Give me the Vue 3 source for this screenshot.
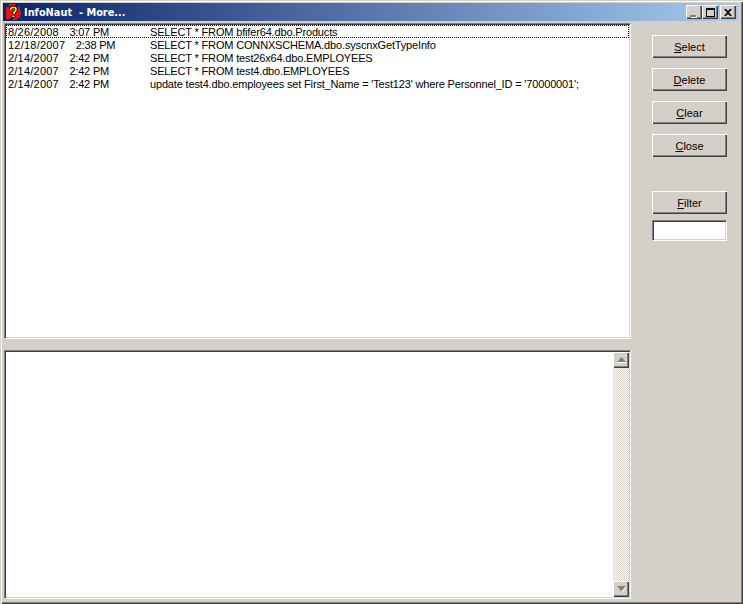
<script setup>
const title = 'InfoNaut  - More...'
const rows = [
  { date: '8/26/2008', time: '3:07 PM', sql: 'SELECT * FROM bfifer64.dbo.Products', focus: true },
  { date: '12/18/2007', time: '2:38 PM', sql: 'SELECT * FROM CONNXSCHEMA.dbo.syscnxGetTypeInfo' },
  { date: '2/14/2007', time: '2:42 PM', sql: 'SELECT * FROM test26x64.dbo.EMPLOYEES' },
  { date: '2/14/2007', time: '2:42 PM', sql: 'SELECT * FROM test4.dbo.EMPLOYEES' },
  { date: '2/14/2007', time: '2:42 PM', sql: "update test4.dbo.employees set First_Name = 'Test123' where Personnel_ID = '70000001';" },
]
const actions = [
  { key: 'S', rest: 'elect' },
  { key: 'D', rest: 'elete' },
  { key: 'C', rest: 'lear' },
  { key: 'C', rest: 'lose' },
]
</script>

<template>
  <div class="window">
    <header class="titlebar">
      <svg class="app-icon" width="16" height="16" viewBox="0 0 16 16">
        <path d="M1 3h3V0h6v3h5v4h1v4h-1v3h-3v2H8v-2H5v1H1z" fill="#e8101c"/>
        <path d="M5.500 6C5.500 2.500 11 2.500 11 5.500 11 7.500 8.500 7.500 8.500 10" fill="none" stroke="#000" stroke-width="3.400"/>
        <path d="M5.500 6C5.500 2.500 11 2.500 11 5.500 11 7.500 8.500 7.500 8.500 10" fill="none" stroke="#fce000" stroke-width="1.800"/>
        <rect x="7" y="11" width="3" height="2.500" fill="#fce000" stroke="#000" stroke-width=".8"/>
      </svg>
      <span class="title">{{ title }}</span>
      <div class="caption-buttons">
        <button class="cap"><span class="min-glyph"></span></button>
        <button class="cap"><span class="max-glyph"></span></button>
        <button class="cap close">
          <svg width="8" height="7" viewBox="0 0 8 7"><path d="M0 0h2l2 2 2-2h2L5 3.500 8 7H6L4 5 2 7H0l3-3.500z" fill="#000"/></svg>
        </button>
      </div>
    </header>

    <div class="client">
      <main class="panes">
        <section class="list sunken">
          <div v-for="(r, i) in rows" :key="i" class="row" :class="{ focus: r.focus }">
            <span class="when"><span class="date">{{ r.date }}</span><span class="time">{{ r.time }}</span></span>
            <span class="sql">{{ r.sql }}</span>
          </div>
        </section>
        <section class="detail sunken">
          <div class="detail-body"></div>
          <div class="scrollbar">
            <div class="arrow">
              <svg width="9" height="6" viewBox="0 0 9 6"><path d="M4.500 0 9 5H0z" fill="#808080"/><path d="M0 5h9v1H0z" fill="#fff"/></svg>
            </div>
            <div class="track"></div>
            <div class="arrow">
              <svg width="9" height="6" viewBox="0 0 9 6"><path d="M0 0h9L4.500 5.500z" fill="#808080"/><path d="M4.500 5.500 9 0v1.500L5.500 6z" fill="#fff"/></svg>
            </div>
          </div>
        </section>
      </main>

      <aside class="side">
        <div class="actions">
          <button v-for="(a, i) in actions" :key="i" class="btn"><u>{{ a.key }}</u>{{ a.rest }}</button>
        </div>
        <div class="filter">
          <button class="btn"><u>F</u>ilter</button>
          <input class="filter-input sunken" type="text" />
        </div>
      </aside>
    </div>
  </div>
</template>

<style>
html, body { margin: 0; padding: 0; background: #d4d0c8; }
</style>

<style scoped>
.window {
  width: 743px;
  height: 604px;
  box-sizing: border-box;
  background: #d4d0c8;
  padding: 3px 5px 3px 3px;
  display: flex;
  flex-direction: column;
  font-family: "Liberation Sans", Arial, sans-serif;
  font-size: 11px;
  color: #000;
  box-shadow: inset 1px 1px 0 #d4d0c8, inset 2px 2px 0 #fff, inset -1px -1px 0 #404040, inset -2px -2px 0 #808080;
}
.titlebar {
  height: 18px;
  flex: none;
  display: flex;
  align-items: center;
  padding-left: 2px;
  background: linear-gradient(90deg, #0a246a, #a6caf0);
}
.app-icon { flex: none; }
.title {
  margin-left: 3px;
  color: #fff;
  font-family: "DejaVu Sans", sans-serif;
  font-weight: 700;
  font-size: 9.800px;
  white-space: pre;
}
.caption-buttons { margin-left: auto; margin-right: 2px; display: flex; }
.cap {
  width: 16px;
  height: 14px;
  padding: 0;
  border: 0;
  background: #d4d0c8;
  display: flex;
  align-items: center;
  justify-content: center;
  position: relative;
  box-shadow: inset 1px 1px 0 #fff, inset -1px -1px 0 #404040, inset -2px -2px 0 #808080;
}
.close { margin-left: 2px; }
.min-glyph { width: 6px; height: 2px; background: #808080; box-shadow: 1px 1px 0 #fff; margin-top: 7px; margin-right: 2px; }
.max-glyph { width: 9px; height: 9px; box-sizing: border-box; border: 1px solid #000; border-top-width: 2px; }
.client { flex: 1; min-height: 0; display: flex; padding-top: 2px; }
.panes { width: 627px; flex: none; margin: 0 0 2px 1px; display: flex; flex-direction: column; gap: 11px; }
.sunken {
  box-sizing: border-box;
  background: #fff;
  border: 1px solid;
  border-color: #808080 #fff #fff #808080;
  box-shadow: inset 1px 1px 0 #404040, inset -1px -1px 0 #d4d0c8;
}
.list { height: 316px; flex: none; padding: 1px; }
.row {
  height: 13px;
  line-height: 15px;
  display: grid;
  grid-template-columns: 142px 1fr;
  padding-left: 2px;
  white-space: pre;
}
.date { letter-spacing: .22px; }
.time { margin-left: 10.500px; letter-spacing: -.2px; }
.sql { letter-spacing: -.16px; }
.focus { outline: 1px dotted #000; outline-offset: -1px; }
.detail { flex: 1; min-height: 0; display: flex; padding: 1px; }
.detail-body { flex: 1; }
.scrollbar { width: 16px; flex: none; display: flex; flex-direction: column; }
.track {
  flex: 1;
  background: repeating-conic-gradient(#d4d0c8 0 25%, #fff 0 50%) 0 0 / 2px 2px;
}
.arrow {
  height: 16px;
  flex: none;
  display: flex;
  align-items: center;
  justify-content: center;
  background: #d4d0c8;
  box-shadow: inset 1px 1px 0 #fff, inset -1px -1px 0 #404040, inset -2px -2px 0 #808080;
}
.side {
  flex: 1;
  padding: 12px 10px 0 21px;
  display: flex;
  flex-direction: column;
}
.actions { display: flex; flex-direction: column; gap: 10px; }
.btn {
  height: 23px;
  width: 75px;
  padding: 0;
  border: 0;
  background: #d4d0c8;
  font: inherit;
  color: #000;
  box-shadow: inset 1px 1px 0 #fff, inset -1px -1px 0 #404040, inset -2px -2px 0 #808080;
}
.filter { margin-top: 34px; display: flex; flex-direction: column; gap: 6px; }
.filter-input { width: 75px; height: 21px; padding: 0; outline: none; }
</style>
